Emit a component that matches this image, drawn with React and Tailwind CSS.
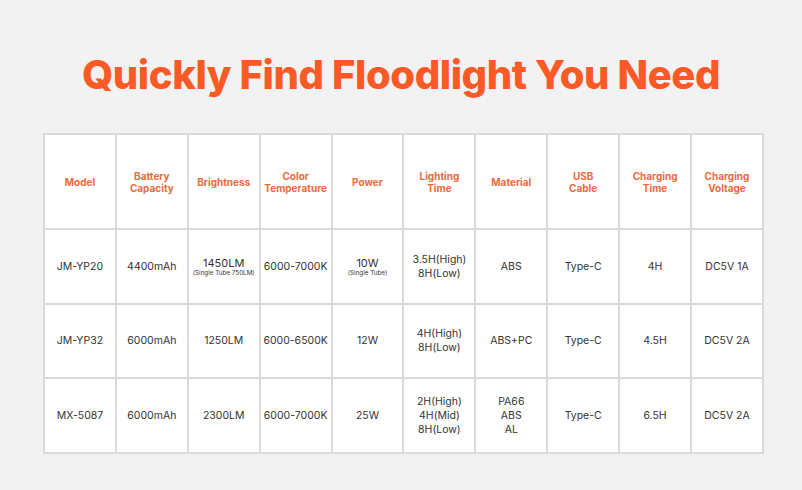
import React from 'react';

const headers = [
  ['Model'],
  ['Battery', 'Capacity'],
  ['Brightness'],
  ['Color', 'Temperature'],
  ['Power'],
  ['Lighting', 'Time'],
  ['Material'],
  ['USB', 'Cable'],
  ['Charging', 'Time'],
  ['Charging', 'Voltage'],
];

const rows = [
  {
    h: 'h-[75px]',
    cells: [
      ['JM-YP20'],
      ['4400mAh'],
      ['1450LM', '(Single Tube 750LM)'],
      ['6000-7000K'],
      ['10W', '(Single Tube)'],
      ['3.5H(High)', '8H(Low)'],
      ['ABS'],
      ['Type-C'],
      ['4H'],
      ['DC5V 1A'],
    ],
  },
  {
    h: 'h-[74px]',
    cells: [
      ['JM-YP32'],
      ['6000mAh'],
      ['1250LM'],
      ['6000-6500K'],
      ['12W'],
      ['4H(High)', '8H(Low)'],
      ['ABS+PC'],
      ['Type-C'],
      ['4.5H'],
      ['DC5V 2A'],
    ],
  },
  {
    h: 'h-[75px]',
    cells: [
      ['MX-5087'],
      ['6000mAh'],
      ['2300LM'],
      ['6000-7000K'],
      ['25W'],
      ['2H(High)', '4H(Mid)', '8H(Low)'],
      ['PA66', 'ABS', 'AL'],
      ['Type-C'],
      ['6.5H'],
      ['DC5V 2A'],
    ],
  },
];

// cells with a tiny note under the main value
const noted = { '1450LM': true, '10W': true };

const Cell = ({ lines }) => {
  if (noted[lines[0]]) {
    return (
      <div className="flex flex-col items-center">
        <span className="text-[11px] leading-[12px]">{lines[0]}</span>
        <span className="text-[6.3px] leading-[8px]">{lines[1]}</span>
      </div>
    );
  }
  return (
    <div className="flex flex-col items-center text-[10.5px] leading-[14px]">
      {lines.map((l) => (
        <span key={l}>{l}</span>
      ))}
    </div>
  );
};

export default function App() {
  return (
    <div className="w-[802px] h-[490px] bg-[#f2f2f2] font-['Inter',_sans-serif] pt-[51px]">
      <h1 className="text-center text-[40px] leading-[48px] font-extrabold tracking-[-0.01em] text-[#fb5a27]">
        Quickly Find Floodlight You Need
      </h1>
      <table className="mt-[34px] ml-[43px] w-[721px] table-fixed border-collapse bg-white text-[#333333]">
        <tbody>
          <tr className="h-[95px]">
            {headers.map((h, i) => (
              <th
                key={i}
                className="border-2 border-[#dadada] p-0 text-center align-middle text-[10px] leading-[12px] font-bold text-[#ec6a3e]"
              >
                {h.map((l) => (
                  <div key={l}>{l}</div>
                ))}
              </th>
            ))}
          </tr>
          {rows.map((r, ri) => (
            <tr key={ri} className={r.h}>
              {r.cells.map((c, ci) => (
                <td key={ci} className="border-2 border-[#dadada] p-0 text-center align-middle">
                  <Cell lines={c} />
                </td>
              ))}
            </tr>
          ))}
        </tbody>
      </table>
    </div>
  );
}
